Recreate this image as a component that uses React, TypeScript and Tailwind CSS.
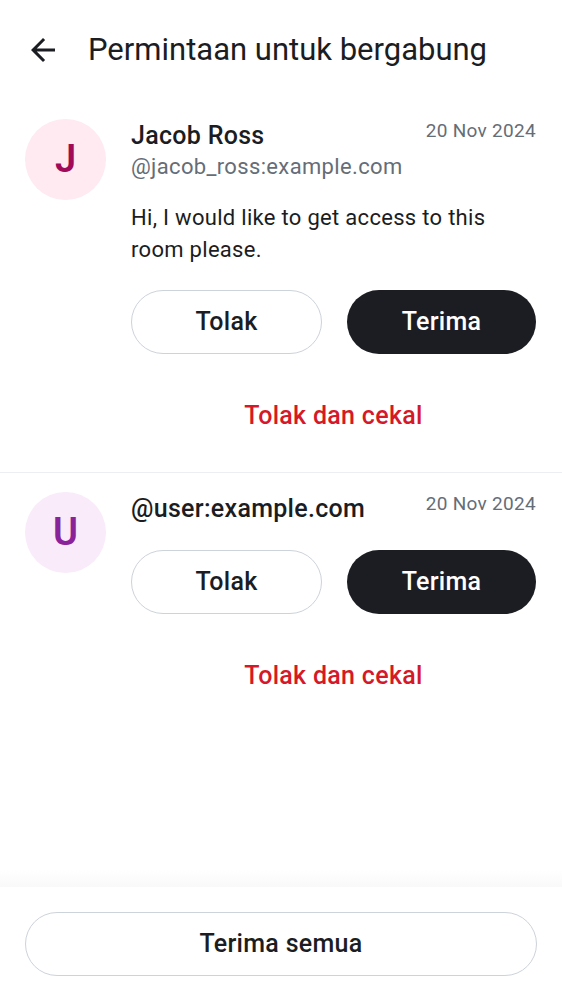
import React from "react";

const FONT = { fontFamily: "Roboto, 'Noto Sans', sans-serif" };

type Request = {
  initial: string;
  avatarBg: string;
  avatarFg: string;
  name: string;
  handle?: string;
  message?: string;
  date: string;
};

const requests: Request[] = [
  {
    initial: "J",
    avatarBg: "bg-[#feeaf0]",
    avatarFg: "text-[#a10a59]",
    name: "Jacob Ross",
    handle: "@jacob_ross:example.com",
    message: "Hi, I would like to get access to this room please.",
    date: "20 Nov 2024",
  },
  {
    initial: "U",
    avatarBg: "bg-[#f9ebfa]",
    avatarFg: "text-[#8a2299]",
    name: "@user:example.com",
    date: "20 Nov 2024",
  },
];

function BackArrow() {
  return (
    <svg width="36" height="36" viewBox="0 0 24 24" fill="#1b1d22">
      <path d="M20 11H7.83l5.59-5.59L12 4l-8 8 8 8 1.41-1.41L7.83 13H20v-2z" />
    </svg>
  );
}

function RequestItem({ req, last }: { req: Request; last: boolean }) {
  return (
    <div className={`flex gap-[25px] pl-[25px] pr-[26px] pt-[19px] ${last ? "" : "border-b border-[#ebeef2] pb-[32px]"}`}>
      <div
        className={`w-[81px] h-[81px] shrink-0 rounded-full flex items-center justify-center ${req.avatarBg} ${req.avatarFg} text-[38px] font-semibold`}
      >
        {req.initial}
      </div>
      <div className="flex-1 flex flex-col">
        <div className="flex justify-between items-start">
          <div className="flex flex-col pt-[2px]">
            <span className="text-[25px] leading-[30px] tracking-[0.3px] font-medium text-[#1b1d22]">{req.name}</span>
            {req.handle && (
              <span className="text-[22px] leading-[32px] tracking-[0.35px] text-[#656d77]">{req.handle}</span>
            )}
          </div>
          <span className="text-[19px] leading-[24px] tracking-[0.3px] text-[#656d77]">{req.date}</span>
        </div>
        {req.message && (
          <p className="mt-[19px] text-[22px] leading-[32px] tracking-[0.3px] text-[#1b1d22]">{req.message}</p>
        )}
        <div className={`flex gap-[25px] ${req.message ? "mt-[24px]" : "mt-[26px]"}`}>
          <button className="flex-1 h-[64px] rounded-full border border-[#cdd3da] bg-white text-[25px] tracking-[0.3px] font-medium text-[#1b1d22]">
            Tolak
          </button>
          <button className="flex-1 h-[64px] rounded-full bg-[#1b1d22] text-[25px] tracking-[0.3px] font-medium text-white">
            Terima
          </button>
        </div>
        <button className="mt-[38px] h-[48px] text-[25px] tracking-[0.3px] font-medium text-[#d51928]">
          Tolak dan cekal
        </button>
      </div>
    </div>
  );
}

export default function App() {
  return (
    <div className="w-[562px] h-[1000px] bg-white flex flex-col" style={FONT}>
      <div className="h-[100px] flex items-center pl-[25px] gap-[27px]">
        <BackArrow />
        <h1 className="text-[31px] text-[#1b1d22]">Permintaan untuk bergabung</h1>
      </div>
      <div className="flex-1">
        {requests.map((r, i) => (
          <RequestItem key={i} req={r} last={i === requests.length - 1} />
        ))}
      </div>
      <div className="h-[17px] bg-gradient-to-b from-white to-[#f9f9fa]" />
      <div className="h-[113px] px-[25px] pt-[25px] bg-white">
        <button className="w-full h-[64px] rounded-full border border-[#cdd3da] text-[25px] tracking-[0.3px] font-medium text-[#1b1d22]">
          Terima semua
        </button>
      </div>
    </div>
  );
}
